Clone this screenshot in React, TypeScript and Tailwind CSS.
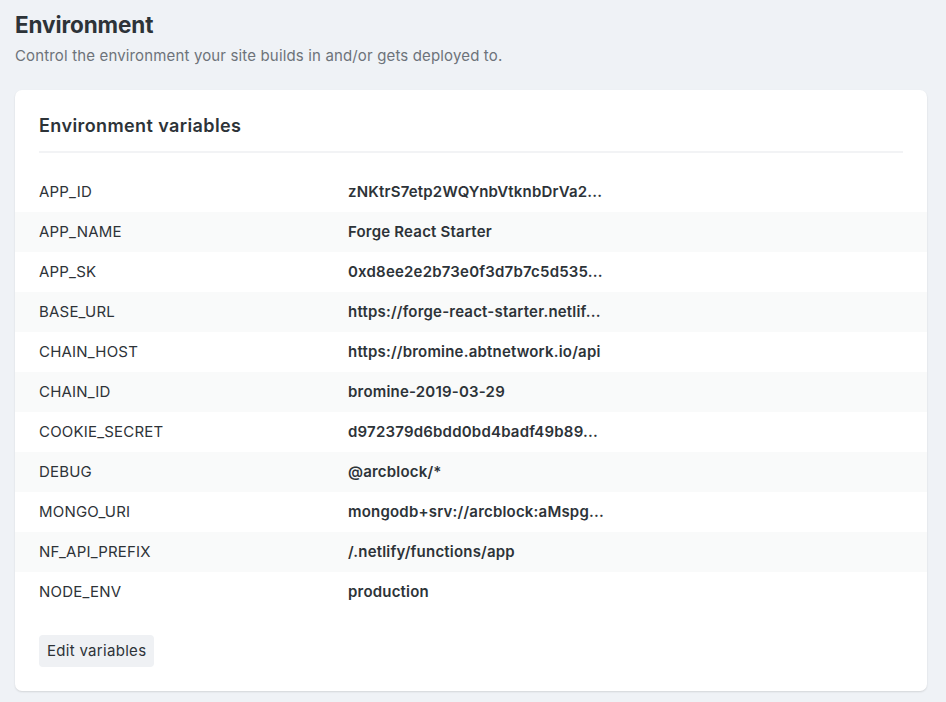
const vars: [string, string][] = [
    ['APP_ID', 'zNKtrS7etp2WQYnbVtknbDrVa2...'],
    ['APP_NAME', 'Forge React Starter'],
    ['APP_SK', '0xd8ee2e2b73e0f3d7b7c5d535...'],
    ['BASE_URL', 'https://forge-react-starter.netlif...'],
    ['CHAIN_HOST', 'https://bromine.abtnetwork.io/api'],
    ['CHAIN_ID', 'bromine-2019-03-29'],
    ['COOKIE_SECRET', 'd972379d6bdd0bd4badf49b89...'],
    ['DEBUG', '@arcblock/*'],
    ['MONGO_URI', 'mongodb+srv://arcblock:aMspg...'],
    ['NF_API_PREFIX', '/.netlify/functions/app'],
    ['NODE_ENV', 'production'],
];

export default function App() {
    return (
        <div className="min-h-[702px] bg-[#eff2f6] pl-[15px] pr-[19px] pt-[10px] pb-[11px] font-['Inter','Liberation_Sans',sans-serif] text-[#2e3338]">
            <h1 className="text-[22.5px] font-bold leading-[30px] tracking-[-0.1px] text-[#2d3338]">Environment</h1>
            <p className="mt-[5px] text-[15px] leading-[22px] tracking-[0.15px] text-[#6d737a]">
                Control the environment your site builds in and/or gets deployed to.
            </p>

            <div className="mt-[23px] rounded-[7px] bg-white pt-[24px] pb-[24px] shadow-[0_1px_2px_rgba(0,0,0,0.12)]">
                <div className="mx-[24px] border-b-2 border-[#f2f3f5] pb-[13px]">
                    <h2 className="text-[18px] font-semibold leading-[24px] tracking-[0.4px] text-[#2d3338]">
                        Environment variables
                    </h2>
                </div>

                <div className="mt-[19px]">
                    {vars.map(([key, value], i) => (
                        <div
                            key={key}
                            className={`flex h-[40px] items-center px-[24px] text-[15px] tracking-[0.2px] ${i % 2 === 1 ? 'bg-[#f9fafa]' : ''}`}
                        >
                            <div className="w-[309px] text-[#2e3338]">{key}</div>
                            <div className="whitespace-nowrap font-semibold text-[#2d3338]">{value}</div>
                        </div>
                    ))}
                </div>

                <div className="mx-[24px] mt-[23px]">
                    <button
                        type="button"
                        className="h-[32px] rounded-[4px] bg-[#eff1f4] px-[8px] text-[15px] tracking-[0.3px] text-[#2d3338]"
                    >
                        Edit variables
                    </button>
                </div>
            </div>
        </div>
    );
}
